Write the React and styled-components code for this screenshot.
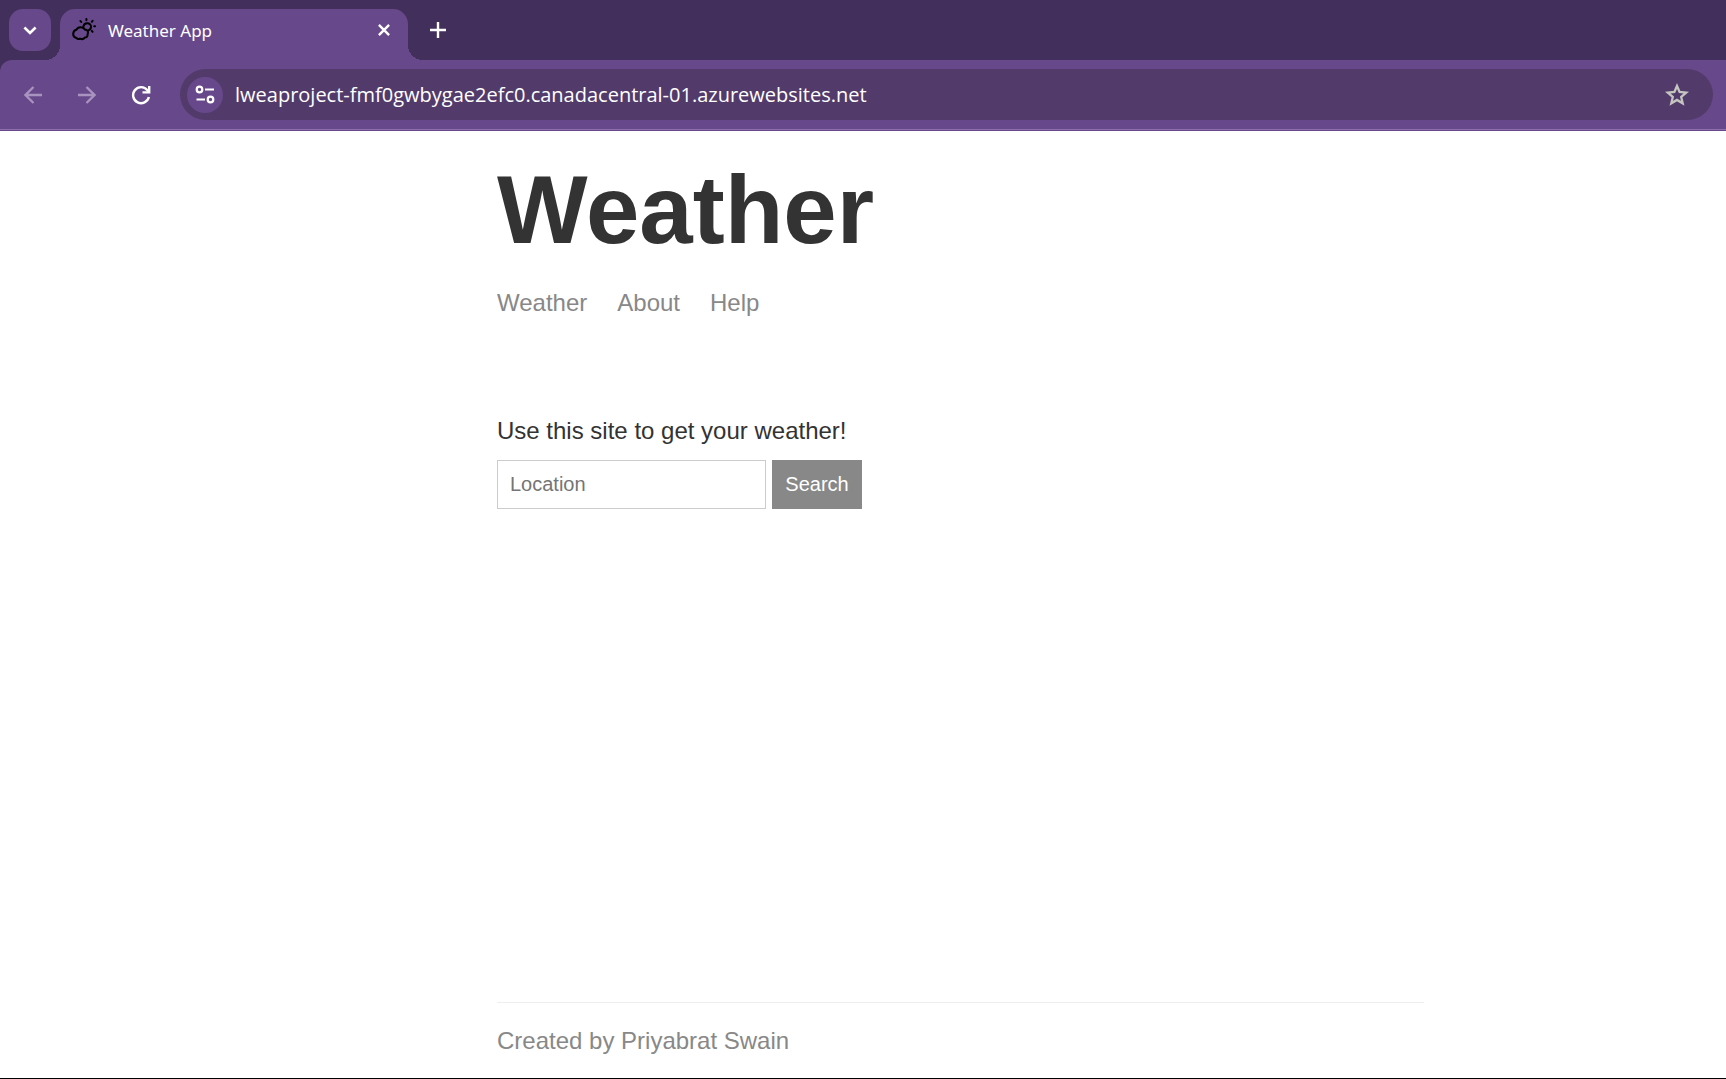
import React from "react";
import styled, { createGlobalStyle } from "styled-components";

const colors = {
  strip: "#432f5c",
  toolbar: "#67488b",
  field: "#523b6b",
  rule: "#8c70ab",
  muted: "#a893bf",
  gray: "#888888",
};

const GlobalStyle = createGlobalStyle`
  *, *::before, *::after { box-sizing: border-box; }
  body { margin: 0; background: #fff; }
  button, input { font: inherit; margin: 0; }
`;

const Screen = styled.div`
  display: flex;
  flex-direction: column;
  min-height: 100vh;
  border-bottom: 1px solid #000;
  font-family: "Liberation Sans", Arial, sans-serif;
`;

const TabStrip = styled.header`
  display: flex;
  align-items: flex-start;
  gap: 9px;
  height: 60px;
  padding: 9px 9px 0;
  background: ${colors.strip};
`;

const IconButton = styled.button`
  display: flex;
  align-items: center;
  justify-content: center;
  flex: none;
  width: ${(p) => p.$size}px;
  height: ${(p) => p.$size}px;
  padding: 0;
  border: 0;
  border-radius: ${(p) => p.$radius || "50%"};
  background: ${(p) => p.$fill || "transparent"};
  color: ${(p) => p.$color || "#fff"};
`;

const Tab = styled.div`
  position: relative;
  display: flex;
  align-items: center;
  gap: 12px;
  width: 348px;
  height: 51px;
  padding: 0 8px 9px 12px;
  border-radius: 15px 15px 0 0;
  background: ${colors.toolbar};
  color: #fff;

  &::before,
  &::after {
    content: "";
    position: absolute;
    bottom: 0;
    width: 15px;
    height: 15px;
  }
  &::before {
    right: 100%;
    background: radial-gradient(circle at 0 0, transparent 15px, ${colors.toolbar} 15px);
  }
  &::after {
    left: 100%;
    background: radial-gradient(circle at 100% 0, transparent 15px, ${colors.toolbar} 15px);
  }
`;

const TabTitle = styled.span`
  flex: 1;
  padding-top: 2px;
  font: 17px/24px "Noto Sans", "Open Sans", sans-serif;
`;

const ToolbarBack = styled.div`
  background: ${colors.strip};
`;

const Toolbar = styled.nav`
  display: flex;
  align-items: center;
  gap: 12px;
  height: 71px;
  padding: 0 13px 2px 12px;
  border-radius: 12px 0 0 0;
  background: linear-gradient(${colors.rule}, ${colors.rule}) 0 69px / 100% 1px no-repeat ${colors.toolbar};
`;

const AddressBar = styled.div`
  display: flex;
  align-items: center;
  gap: 12px;
  flex: 1;
  height: 51px;
  margin-left: 6px;
  padding: 0 18px 0 7px;
  border-radius: 26px;
  background: ${colors.field};
`;

const UrlInput = styled.input`
  flex: 1;
  min-width: 0;
  height: 32px;
  padding: 0;
  border: 0;
  outline: 0;
  background: transparent;
  color: #fff;
  font: 20px/32px "Open Sans", "Noto Sans", sans-serif;
`;

const Page = styled.div`
  display: flex;
  flex: 1;
  flex-direction: column;
  padding: 24px 302px 23px 497px;
  color: #333;
  font-size: 24px;
  line-height: 28px;
`;

const Title = styled.h1`
  margin: 0 0 24px;
  font-size: 96px;
  line-height: 110px;
`;

const Links = styled.nav`
  display: flex;
  gap: 30px;
`;

const PageLink = styled.a`
  color: ${colors.gray};
  text-decoration: none;
`;

const Main = styled.main`
  flex: 1;
  padding-top: 100px;
`;

const Prompt = styled.label`
  display: block;
  margin-bottom: 15px;
`;

const SearchForm = styled.form`
  display: flex;
  gap: 6px;
  font-size: 20px;
`;

const LocationInput = styled.input`
  width: 269px;
  height: 49px;
  padding: 0 12px;
  border: 1px solid #ccc;
  border-radius: 0;
  background: #fff;
  color: #333;
  &::placeholder { color: #757575; opacity: 1; }
`;

const SearchButton = styled.button`
  min-width: 90px;
  height: 49px;
  padding: 0 12px 2px;
  border: 0;
  background: ${colors.gray};
  color: #fff;
`;

const Footer = styled.footer`
  padding-top: 24px;
  border-top: 1px solid #eee;
  color: ${colors.gray};
`;

const Icon = ({ size, stroke = 2, children }) => (
  <svg
    width={size}
    height={size}
    viewBox={`0 0 ${size} ${size}`}
    fill="none"
    stroke="currentColor"
    strokeWidth={stroke}
    aria-hidden="true"
  >
    {children}
  </svg>
);

const WeatherIcon = () => (
  <svg width="24" height="24" viewBox="0 0 24 24" fill="none" stroke="#000" strokeWidth="2" strokeLinecap="round" strokeLinejoin="round" aria-hidden="true">
    <path d="M4.4 20C2.2 19.4 1.1 17.6 1.2 15.6C1.4 13.6 2.6 12.2 4.4 11.8C5.4 9.8 7.2 9 9 9.2C10.8 9.2 12 10 12.6 11.4C14.6 11.4 16.1 13 16 14.8C16 15.4 15.8 15.8 15.5 16.2C15.9 18.2 14.8 19.6 12.8 19.6C11.6 21.2 9.6 21.4 8 20.6C6.6 21.4 5.4 21 4.4 20Z" />
    <path d="M11.4 8.6C11.6 6.6 13.2 5.2 15.2 5.2C17.4 5.2 19 6.8 19 8.8C19 10.6 17.8 12 16 12.4" />
    <path d="M8.4 3L9.2 4M14.4 1V2.2M20.6 2.8L19.8 3.8M22.2 8.3H23.1M19.8 12.8L20.6 13.8" />
  </svg>
);

export default function App() {
  return (
    <Screen>
      <GlobalStyle />
      <TabStrip>
        <IconButton $size={42} $radius="14px" $fill={colors.toolbar} aria-label="Search tabs">
          <Icon size={14} stroke={2.6}><path d="M1.4 4.5L7 10L12.6 4.5" /></Icon>
        </IconButton>
        <Tab>
          <WeatherIcon />
          <TabTitle>Weather App</TabTitle>
          <IconButton $size={32} aria-label="Close tab">
            <Icon size={14} stroke={2.4}><path d="M1.9 1.9L12.1 12.1M12.1 1.9L1.9 12.1" /></Icon>
          </IconButton>
        </Tab>
        <IconButton $size={42} aria-label="New tab">
          <Icon size={16} stroke={2.4}><path d="M8 0V16M0 8H16" /></Icon>
        </IconButton>
      </TabStrip>
      <ToolbarBack>
        <Toolbar aria-label="Browser">
          <IconButton $size={42} $color={colors.muted} aria-label="Back">
            <Icon size={18} stroke={2.3}><path d="M18 9H1.8M9.5 1L1.5 9L9.5 17" /></Icon>
          </IconButton>
          <IconButton $size={42} $color={colors.muted} aria-label="Forward">
            <Icon size={18} stroke={2.3}><path d="M0 9H16.2M8.5 1L16.5 9L8.5 17" /></Icon>
          </IconButton>
          <IconButton $size={42} aria-label="Reload">
            <Icon size={20} stroke={2.4}>
              <path d="M17.9 12A8 8 0 1 1 16.4 5.2L18 7" />
              <path d="M18.2 1V7.4H11.5" />
            </Icon>
          </IconButton>
          <AddressBar>
            <IconButton $size={36} $fill={colors.toolbar} aria-label="Site information">
              <Icon size={20} stroke={2.2}>
                <circle cx="4.5" cy="4.5" r="2.8" />
                <path d="M10 4.5H19M1.5 14.5H10" />
                <circle cx="15.5" cy="14.5" r="2.8" />
              </Icon>
            </IconButton>
            <UrlInput
              aria-label="Address"
              spellCheck={false}
              defaultValue="lweaproject-fmf0gwbygae2efc0.canadacentral-01.azurewebsites.net"
            />
            <IconButton $size={36} $color="#c4c4c0" aria-label="Bookmark this page">
              <Icon size={24} stroke={2.3}>
                <path d="M12 3L14.6 9L21.2 9.6L16.2 13.9L17.7 20.3L12 16.9L6.3 20.3L7.8 13.9L2.8 9.6L9.4 9Z" />
              </Icon>
            </IconButton>
          </AddressBar>
        </Toolbar>
      </ToolbarBack>
      <Page>
        <Title>Weather</Title>
        <Links aria-label="Site">
          <PageLink href="#weather">Weather</PageLink>
          <PageLink href="#about">About</PageLink>
          <PageLink href="#help">Help</PageLink>
        </Links>
        <Main>
          <Prompt htmlFor="location">Use this site to get your weather!</Prompt>
          <SearchForm onSubmit={(e) => e.preventDefault()}>
            <LocationInput id="location" placeholder="Location" />
            <SearchButton>Search</SearchButton>
          </SearchForm>
        </Main>
        <Footer>Created by Priyabrat Swain</Footer>
      </Page>
    </Screen>
  );
}
